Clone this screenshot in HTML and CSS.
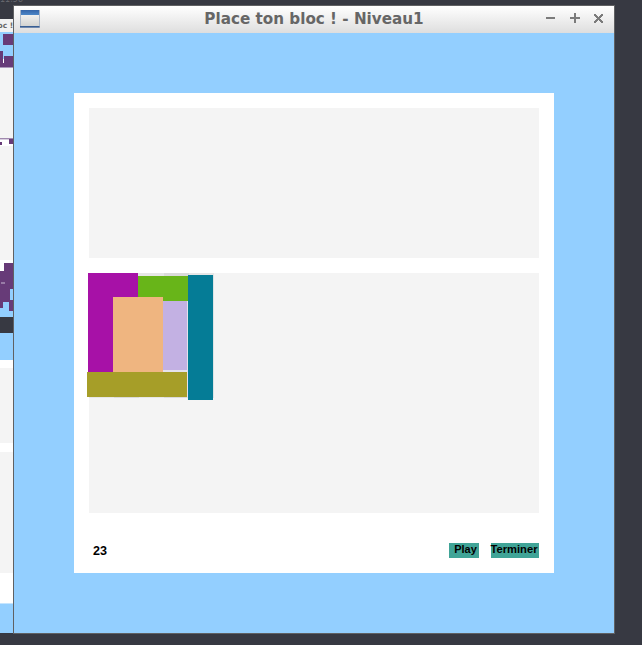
FILE: index.html
```html
<!DOCTYPE html>
<html lang="fr">
<head>
<meta charset="utf-8">
<title>Place ton bloc ! - Niveau1</title>
<link rel="stylesheet" href="styles.css">
</head>
<body>
<div class="desktop">
  <svg class="behind" width="13" height="633" viewBox="0 0 13 633" shape-rendering="crispEdges">
    <text class="clock" x="0" y="2" textLength="23" lengthAdjust="spacingAndGlyphs">11:58</text>
    <rect y="19" width="13" height="13" fill="#f1f1f1"/>
    <text class="back-title" x="-2.500" y="27.500">oc !</text>
    <rect y="32" width="13" height="285" fill="#93cfff"/>
    <rect y="68" width="13" height="195" fill="#f4f4f4"/>
    <rect y="138" width="13" height="8" fill="#fff"/>
    <rect y="260" width="4" height="11" fill="#fff"/>
    <rect x="4" y="260" width="9" height="3" fill="#fff"/>
    <rect x="3" y="59" width="1" height="4" fill="#fff"/>
    <g fill="#673b78">
      <path d="M3 34H13V45H3ZM0 51H3V63H4V56H13V67H0Z"/>
      <path d="M9 139H13V144H9ZM0 142H2V145H0Z"/>
      <path d="M4 263H13V289H10V300H13V311H9V302H3V308H0V271H4Z"/>
    </g>
    <rect y="138" width="13" height="1" fill="#9f88ad"/>
    <rect y="139" width="9" height="1" fill="#d9cfe0"/>
    <rect y="67" width="13" height="1" fill="#ab98ba"/>
    <rect x="1" y="282" width="4" height="2" fill="#987ba6"/>
    <rect y="317" width="13" height="16" fill="#373942"/>
    <rect y="333" width="13" height="27" fill="#93cfff"/>
    <rect y="360" width="13" height="8" fill="#fff"/>
    <rect y="368" width="13" height="75" fill="#f4f4f4"/>
    <rect y="443" width="13" height="9" fill="#fff"/>
    <rect y="452" width="13" height="121" fill="#f4f4f4"/>
    <rect y="573" width="13" height="30" fill="#fff"/>
    <rect y="603" width="13" height="1" fill="#c5e5ff"/>
    <rect y="604" width="13" height="29" fill="#93cfff"/>
  </svg>
  <main class="window">
    <header class="titlebar">
      <svg class="app-icon" width="20" height="19" viewBox="0 0 20 19">
        <defs>
          <linearGradient id="bar" x2="0" y2="1"><stop stop-color="#3465a8"/><stop offset="1" stop-color="#4c87c8"/></linearGradient>
          <linearGradient id="pane" x2="0" y2="1"><stop stop-color="#f1f1ef"/><stop offset="1" stop-color="#d2d3d1"/></linearGradient>
        </defs>
        <path fill="#a9b6c8" d="M0 0H20V18H0Z"/>
        <path fill="url(#pane)" d="M1 5H19V16H1Z"/>
        <path fill="url(#bar)" d="M1 0H19V5H1Z"/>
        <path fill="#385f94" d="M0 16H19.500V17.500H0Z"/>
      </svg>
      <h1 class="title">Place ton bloc ! - Niveau1</h1>
      <svg class="controls" width="58" height="12" viewBox="0 0 58 12" shape-rendering="crispEdges">
        <path fill="#7b7b7b" d="M0 5H9V7H0ZM24 5H34V7H24ZM28 1H30V11H28Z"/>
        <path fill="#7b7b7b" d="M48 2H50V3H51V4H52V5H53V4H54V3H55V2H57V4H56V5H55V6H54V7H55V8H56V9H57V11H55V10H54V9H53V8H52V9H51V10H50V11H48V9H49V8H50V7H51V6H50V5H49V4H48Z"/>
      </svg>
    </header>
    <section class="game">
      <div class="panel">
        <div class="tray"></div>
        <div class="board">
          <svg class="pieces" width="127" height="127" viewBox="0 0 127 127" shape-rendering="crispEdges">
            <path fill="#e6e6e6" d="M2 0H127V125H2Z"/>
            <path fill="#dadada" d="M77 0H102V25H77ZM27 100H52V125H27ZM77 100H102V125H77Z"/>
            <path fill="#dce4e5" d="M126 2H127V125H126Z"/>
            <path fill="#e5e2ec" d="M76 97H101V99H76ZM100 28H101V125H100Z"/>
            <path fill="#a711a7" d="M1 0H51V24H26V99H1Z"/>
            <path fill="#68b519" d="M51 3H101V28H51Z"/>
            <path fill="#c3b1e3" d="M76 28H100V97H76Z"/>
            <path fill="#efb580" d="M26 24H76V99H26Z"/>
            <path fill="#a69e28" d="M0 99H100V124H0Z"/>
            <path fill="#057c96" d="M101 2H126V127H101Z"/>
          </svg>
        </div>
        <footer class="actions">
          <span class="count">23</span>
          <button class="btn play">Play</button>
          <button class="btn finish">Terminer</button>
        </footer>
      </div>
    </section>
  </main>
</div>
</body>
</html>
```
FILE: styles.css
```css
* { box-sizing: border-box; }
body { margin: 0; }
.desktop {
  display: flex;
  width: 642px;
  height: 645px;
  overflow: hidden;
  background: #373942;
}
.behind { flex: none; overflow: visible; }
.clock { font: 11px "DejaVu Sans", sans-serif; fill: #64656b; }
.back-title { font: bold 7.500px "DejaVu Sans", sans-serif; fill: #666; }
.window {
  position: relative;
  flex: none;
  width: 602px;
  height: 629px;
  margin-top: 5px;
  border: 1px solid #606163;
}
.titlebar {
  display: flex;
  justify-content: space-between;
  height: 27px;
  padding: 4px 10px 0 6px;
  background: linear-gradient(#fff, #dedede);
}
.title {
  margin: 0 0 0 42px;
  font: bold 15.200px/19px "DejaVu Sans", sans-serif;
  color: #666;
  white-space: nowrap;
}
.controls { margin-top: 2px; }
.game {
  height: 600px;
  padding: 60px;
  background: #93cfff;
}
.panel {
  height: 480px;
  padding: 15px;
  background: #fff;
}
.tray { height: 150px; background: #f4f4f4; }
.board {
  position: relative;
  height: 240px;
  margin-top: 15px;
  background: #f4f4f4;
}
.pieces { position: absolute; left: -2px; top: 0; }
.actions {
  display: flex;
  height: 15px;
  margin-top: 30px;
  font: bold 11px/13px "Liberation Sans", sans-serif;
  color: #000;
}
.count {
  margin: 1px auto 0 4px;
  font-size: 12.600px;
  line-height: 14px;
}
.btn {
  display: flex;
  justify-content: center;
  height: 15px;
  padding: 0;
  border: 0;
  background: #40a497;
  font: inherit;
  color: #000;
  white-space: nowrap;
}
.play { width: 30px; margin-right: 12px; padding-left: 3px; }
.finish { width: 48px; padding-right: 2px; font-size: 11.200px; }
```
